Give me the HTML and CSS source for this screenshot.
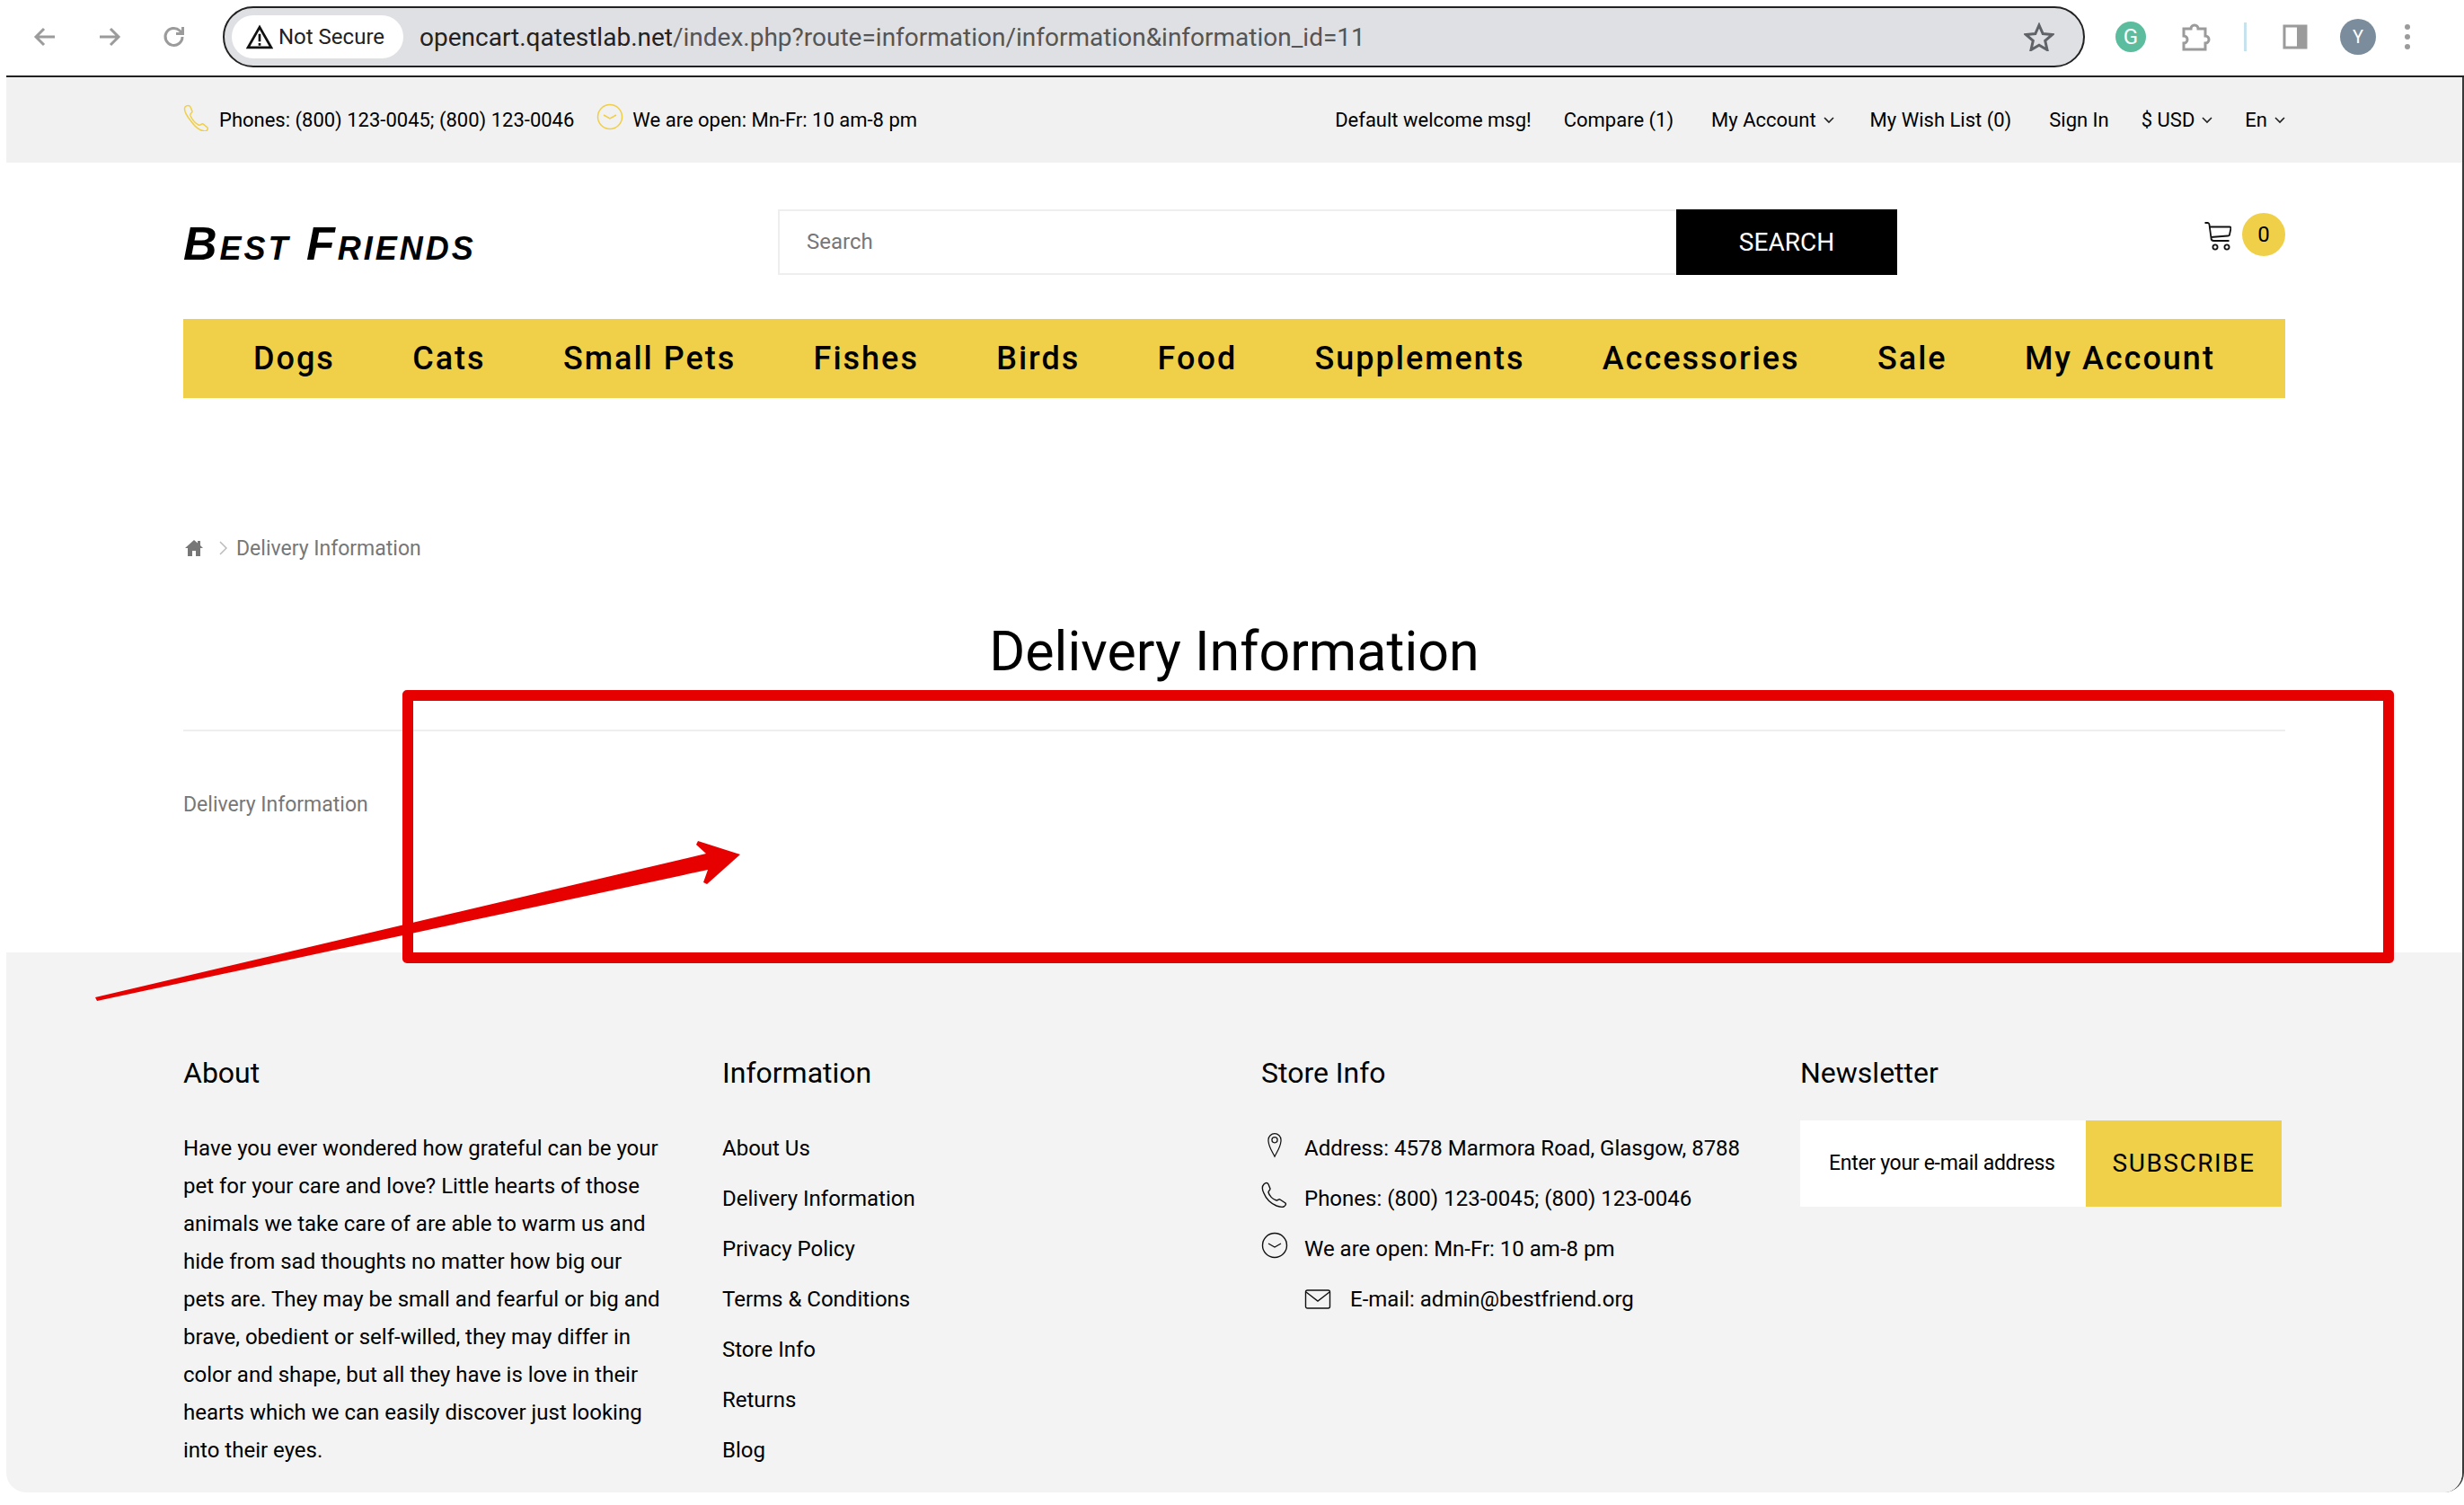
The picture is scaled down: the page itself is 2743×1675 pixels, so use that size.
FILE: index.html
```html
<!DOCTYPE html>
<html lang="en">
<head>
<meta charset="utf-8">
<title>Delivery Information</title>
<link rel="stylesheet" href="styles.css">
</head>
<body>
<div class="window">
  <header class="chrome">
    <div class="nav-btns">
      <svg class="nav-ico" viewBox="0 0 28 28"><path d="M25 14H4M13 5l-9 9 9 9"/></svg>
      <svg class="nav-ico" viewBox="0 0 28 28"><path d="M3 14h21M15 5l9 9-9 9"/></svg>
      <svg class="nav-ico" viewBox="0 0 28 28"><path d="M23 14a9.500 9.500 0 1 1-3-7l3 3M23.500 3v7.500H16"/></svg>
    </div>
    <div class="omnibox">
      <div class="secure">
        <svg class="warn" viewBox="0 0 28 26"><path class="warn-o" d="M14 3L26 24H2z"/><path class="warn-i" d="M14 10v8M14 19.500v2.500"/></svg>
        <span>Not Secure</span>
      </div>
      <div class="url"><span class="url-host">opencart.qatestlab.net</span>/index.php?route=information/information&amp;information_id=11</div>
      <svg class="star" viewBox="0 0 34 32"><path d="M17 3l4.200 9.600 10.300 1-7.800 6.800 2.300 10.100-9-5.300-9 5.300 2.300-10.100-7.800-6.800 10.300-1z"/></svg>
    </div>
    <div class="ext">
      <div class="ext-g">G</div>
      <svg class="ext-puzzle" viewBox="0 0 34 34"><path d="M3 8h8a4 4 0 0 1 8 0h8v8a4 4 0 0 1 0 8v7H3v-7a4 4 0 0 0 0-8z"/></svg>
      <div class="ext-div"></div>
      <svg class="ext-panel" viewBox="0 0 28 28"><path class="panel-o" d="M2 2h24v24H2z"/><path class="panel-f" d="M16 2h10v24H16z"/></svg>
      <div class="ext-avatar">Y</div>
      <div class="ext-dots"><i></i><i></i><i></i></div>
    </div>
  </header>

  <div class="page">
    <div class="topbar">
      <div class="topbar-in">
        <div class="contact">
          <svg class="top-ico" viewBox="0 0 30 30"><path d="M2 3c2-2 5-2 6 0l2 5c0 2-3 2-2 5 2 4 5 8 9 10 3 1 3-2 5-1l5 4c1 2-1 4-3 4-5 0-11-5-16-12C4 13 0 7 2 3z"/></svg>
          <span class="contact-t">Phones: (800) 123-0045; (800) 123-0046</span>
          <svg class="top-ico clock-y" viewBox="0 0 30 30"><circle cx="15" cy="15" r="13.500"/><path d="M8 13l7 4 7-4"/></svg>
          <span class="contact-t">We are open: Mn-Fr: 10 am-8 pm</span>
        </div>
        <nav class="toplinks">
          <span class="tl tl-welcome">Default welcome msg!</span>
          <span class="tl tl-compare">Compare (1)</span>
          <span class="tl tl-acc">My Account <svg class="chev" viewBox="0 0 12 8"><path d="M1 1l5 5 5-5"/></svg></span>
          <span class="tl tl-wish">My Wish List (0)</span>
          <span class="tl tl-sign">Sign In</span>
          <span class="tl tl-usd">$ USD <svg class="chev" viewBox="0 0 12 8"><path d="M1 1l5 5 5-5"/></svg></span>
          <span class="tl">En <svg class="chev" viewBox="0 0 12 8"><path d="M1 1l5 5 5-5"/></svg></span>
        </nav>
      </div>
    </div>

    <div class="wrap">
      <div class="head">
        <div class="logo">Best Friends</div>
        <form class="search">
          <div class="search-in">Search</div>
          <div class="search-btn">SEARCH</div>
        </form>
        <div class="cart">
          <svg class="cart-ico" viewBox="0 0 30 32"><path d="M0.500 1h3c1 0 2 1 2 2l2 15c0 2 1 3 3 3h17M6 5.500h22c1 0 1.500 .5 1.500 1.500l-1.500 7c0 1-1 1.500-2 1.500l-19 1.500"/><circle cx="12" cy="28" r="2.600"/><circle cx="25" cy="28" r="2.600"/></svg>
          <div class="badge">0</div>
        </div>
      </div>

      <nav class="menu">
        <a>Dogs</a><a>Cats</a><a>Small Pets</a><a>Fishes</a><a>Birds</a><a>Food</a><a>Supplements</a><a>Accessories</a><a>Sale</a><a>My Account</a>
      </nav>

      <div class="crumb">
        <svg class="home" viewBox="0 0 20 18"><path d="M10 0L0 9h3v9h5v-6h4v6h5V9h3l-3-3V1h-3v2.500z"/></svg>
        <svg class="crumb-sep" viewBox="0 0 9 16"><path d="M1 1l7 7-7 7"/></svg>
        <span>Delivery Information</span>
      </div>

      <h1 class="title">Delivery Information</h1>
      <p class="desc">Delivery Information</p>
    </div>

    <footer class="foot">
      <div class="foot-in">
        <section class="fcol">
          <h3>About</h3>
          <p class="about">Have you ever wondered how grateful can be your<br>pet for your care and love? Little hearts of those<br>animals we take care of are able to warm us and<br>hide from sad thoughts no matter how big our<br>pets are. They may be small and fearful or big and<br>brave, obedient or self-willed, they may differ in<br>color and shape, but all they have is love in their<br>hearts which we can easily discover just looking<br>into their eyes.</p>
        </section>
        <section class="fcol">
          <h3>Information</h3>
          <ul class="flinks">
            <li>About Us</li><li>Delivery Information</li><li>Privacy Policy</li><li>Terms &amp; Conditions</li><li>Store Info</li><li>Returns</li><li>Blog</li>
          </ul>
        </section>
        <section class="fcol">
          <h3>Store Info</h3>
          <ul class="flinks store">
            <li><svg class="si" viewBox="0 0 30 34"><path d="M15 32C11 24 7 19 7 11a8 8 0 0 1 16 0c0 8-4 13-8 21z"/><circle cx="15" cy="11" r="3.500"/></svg>Address: 4578 Marmora Road, Glasgow, 8788</li>
            <li><svg class="si" viewBox="0 0 30 30"><path d="M3 3c2-2 4-2 5 0l2 5c0 2-2 2-2 4 1 4 5 8 9 9 2 0 3-2 4-1l6 4c1 1 0 3-2 4-2 1-5 0-8-1-7-3-12-9-14-14-2-4-2-8 0-10z"/></svg>Phones: (800) 123-0045; (800) 123-0046</li>
            <li><svg class="si" viewBox="0 0 30 30"><circle cx="15" cy="15" r="13.500"/><path d="M8 13l7 4 7-4"/></svg>We are open: Mn-Fr: 10 am-8 pm</li>
            <li class="mail"><svg class="si" viewBox="0 0 30 24"><rect x="1.500" y="2" width="27" height="20" rx="2"/><path d="M2 4l13 10L28 4"/></svg>E-mail: admin@bestfriend.org</li>
          </ul>
        </section>
        <section class="fcol">
          <h3>Newsletter</h3>
          <form class="news">
            <div class="news-in">Enter your e-mail address</div>
            <div class="news-btn">SUBSCRIBE</div>
          </form>
        </section>
      </div>
    </footer>
  </div>
</div>

<div class="mark-box"></div>
<svg class="mark-arrow" viewBox="0 0 2743 1675"><path d="M108 1114L106 1110L786 950L775 940L777 936L824 951L787 984L783 982L788 968z"/></svg>
</body>
</html>
```
FILE: styles.css
```css
* { box-sizing: border-box; }
html, body { margin: 0; padding: 0; background: #fff; }
body { width: 2743px; height: 1675px; overflow: hidden; position: relative; font-family: Roboto, "Liberation Sans", sans-serif; color: #000; }
svg { display: block; }
.window { margin-left: 7px; width: 2736px; }

.chrome { height: 86px; border-bottom: 2px solid #222; display: flex; align-items: center; background: #fff; padding-bottom: 2px; }
.nav-btns { width: 241px; display: flex; gap: 44px; padding-left: 29px; }
.nav-ico { width: 28px; height: 28px; fill: none; stroke: #9b9b9b; stroke-width: 3; }
.omnibox { width: 2073px; height: 68px; border: 2px solid #222; border-radius: 34px; background: #dfe0e3; display: flex; align-items: center; padding-left: 8px; }
.secure { width: 191px; height: 48px; border-radius: 24px; background: #fff; display: flex; align-items: center; gap: 6px; padding-left: 16px; font-size: 24px; color: #222; }
.warn { width: 30px; height: 28px; }
.warn-o { fill: none; stroke: #111; stroke-width: 2.500; }
.warn-i { fill: none; stroke: #111; stroke-width: 2.500; }
.url { margin-left: 18px; font-size: 28px; letter-spacing: 0; color: #555; flex: 1; white-space: nowrap; }
.url-host { color: #222; }
.star { width: 34px; height: 32px; margin-right: 32px; fill: none; stroke: #5f6368; stroke-width: 3; }
.ext { flex: 1; display: flex; align-items: center; padding-left: 34px; }
.ext-g { width: 34px; height: 34px; border-radius: 50%; background: #5bbd9d; color: #fff; font-size: 24px; line-height: 34px; text-align: center; }
.ext-puzzle { width: 34px; height: 34px; margin-left: 39px; fill: none; stroke: #9b9b9b; stroke-width: 3; }
.ext-div { width: 3px; height: 32px; margin-left: 36px; background: #c5e2ee; }
.ext-panel { width: 28px; height: 28px; margin-left: 40px; }
.panel-o { fill: none; stroke: #9b9b9b; stroke-width: 3; }
.panel-f { fill: #9b9b9b; }
.ext-avatar { width: 40px; height: 40px; margin-left: 36px; border-radius: 50%; background: #7b8d9c; color: #fff; font-size: 20px; line-height: 40px; text-align: center; }
.ext-dots { margin-left: 32px; display: flex; flex-direction: column; gap: 5px; }
.ext-dots i { width: 6px; height: 6px; border-radius: 50%; background: #9b9b9b; }

.page { width: 2736px; height: 1575px; border-right: 2px solid #3a3a3a; border-radius: 0 0 22px 22px; overflow: hidden; display: flex; flex-direction: column; position: relative; }
.topbar { height: 95px; background: #f1f1f1; padding: 0 197px; flex: none; }
.topbar-in { height: 100%; display: flex; align-items: center; justify-content: space-between; font-size: 22px; }
.contact { display: flex; align-items: center; }
.top-ico { width: 30px; height: 30px; fill: none; stroke: #f0cf45; stroke-width: 1.500; margin-top: -6px; }
.contact-t { margin: 0 25px 0 10px; }
.clock-y { margin-top: -8px; }
.toplinks { display: flex; align-items: center; }
.tl { display: flex; align-items: center; gap: 8px; }
.tl-welcome { margin-right: 36px; }
.tl-compare { margin-right: 42px; }
.tl-acc { margin-right: 40px; }
.tl-wish { margin-right: 42px; }
.tl-sign { margin-right: 36px; }
.tl-usd { margin-right: 36px; }
.chev { width: 12px; height: 8px; fill: none; stroke: #222; stroke-width: 1.600; }

.wrap { padding: 0 197px; flex: none; height: 879px; }
.head { height: 174px; display: flex; align-items: flex-start; }
.logo { width: 662px; margin-top: 62px; font-family: "Liberation Sans", sans-serif; font-weight: 700; font-style: italic; font-variant: small-caps; font-size: 52px; line-height: 56px; letter-spacing: 3px; white-space: nowrap; }
.search { width: 1246px; height: 73px; margin-top: 52px; display: flex; }
.search-in { width: 1000px; height: 100%; border: 2px solid #eee; border-right: 0; padding-left: 30px; font-size: 24px; color: #777; line-height: 69px; }
.search-btn { width: 246px; height: 100%; background: #000; color: #fff; font-size: 28px; line-height: 73px; text-align: center; }
.cart { margin-left: auto; margin-top: 56px; display: flex; gap: 12px; }
.cart-ico { width: 30px; height: 32px; margin-top: 10px; fill: none; stroke: #111; stroke-width: 1.800; }
.badge { width: 48px; height: 48px; border-radius: 50%; background: #f0d048; font-size: 24px; line-height: 48px; text-align: center; }
.menu { height: 88px; background: #f0d048; display: flex; justify-content: space-between; align-items: center; padding: 0 78px; font-size: 36px; font-weight: 500; letter-spacing: 2px; white-space: nowrap; }

.crumb { margin-top: 152px; height: 30px; display: flex; align-items: center; font-size: 23px; color: #777; }
.home { width: 20px; height: 18px; fill: #777; margin-left: 2px; }
.crumb-sep { width: 9px; height: 16px; margin-left: 18px; margin-right: 10px; fill: none; stroke: #bbb; stroke-width: 1.500; }
.title { margin: 60px 0 0; height: 129px; border-bottom: 2px solid #eee; text-align: center; font-size: 61px; line-height: 80px; font-weight: 400; }
.desc { margin: 68px 0 0; font-size: 23px; line-height: 28px; color: #777; }

.foot { flex: 1; background: #f3f3f3; }
.foot-in { padding: 114px 197px 0; display: flex; }
.fcol { width: 600px; flex: none; }
.fcol:last-child { width: 540px; }
.fcol h3 { margin: 0; font-size: 32px; line-height: 40px; font-weight: 400; }
.about { margin: 43px 0 0; font-size: 24px; line-height: 42px; white-space: nowrap; }
.flinks { list-style: none; margin: 36px 0 0; padding: 0; font-size: 24px; }
.flinks li { height: 56px; line-height: 56px; white-space: nowrap; }
.store li { display: flex; align-items: center; }
.si { width: 30px; height: 30px; margin-right: 18px; fill: none; stroke: #111; stroke-width: 1.400; flex: none; margin-top: -8px; }
.mail { padding-left: 48px; }
.mail .si { height: 24px; margin-top: 0; margin-right: 21px; }
.news { margin-top: 33px; display: flex; height: 96px; }
.news-in { width: 318px; background: #fff; padding-left: 32px; font-size: 23px; line-height: 96px; letter-spacing: -0.300px; white-space: nowrap; }
.news-btn { width: 218px; background: #f0d048; font-size: 28px; letter-spacing: 1.500px; line-height: 96px; text-align: center; }

.mark-box { position: absolute; left: 448px; top: 768px; width: 2217px; height: 304px; border: 12px solid #e60000; border-radius: 5px; }
.mark-arrow { position: absolute; left: 0; top: 0; width: 2743px; height: 1675px; fill: #e60000; }
```
